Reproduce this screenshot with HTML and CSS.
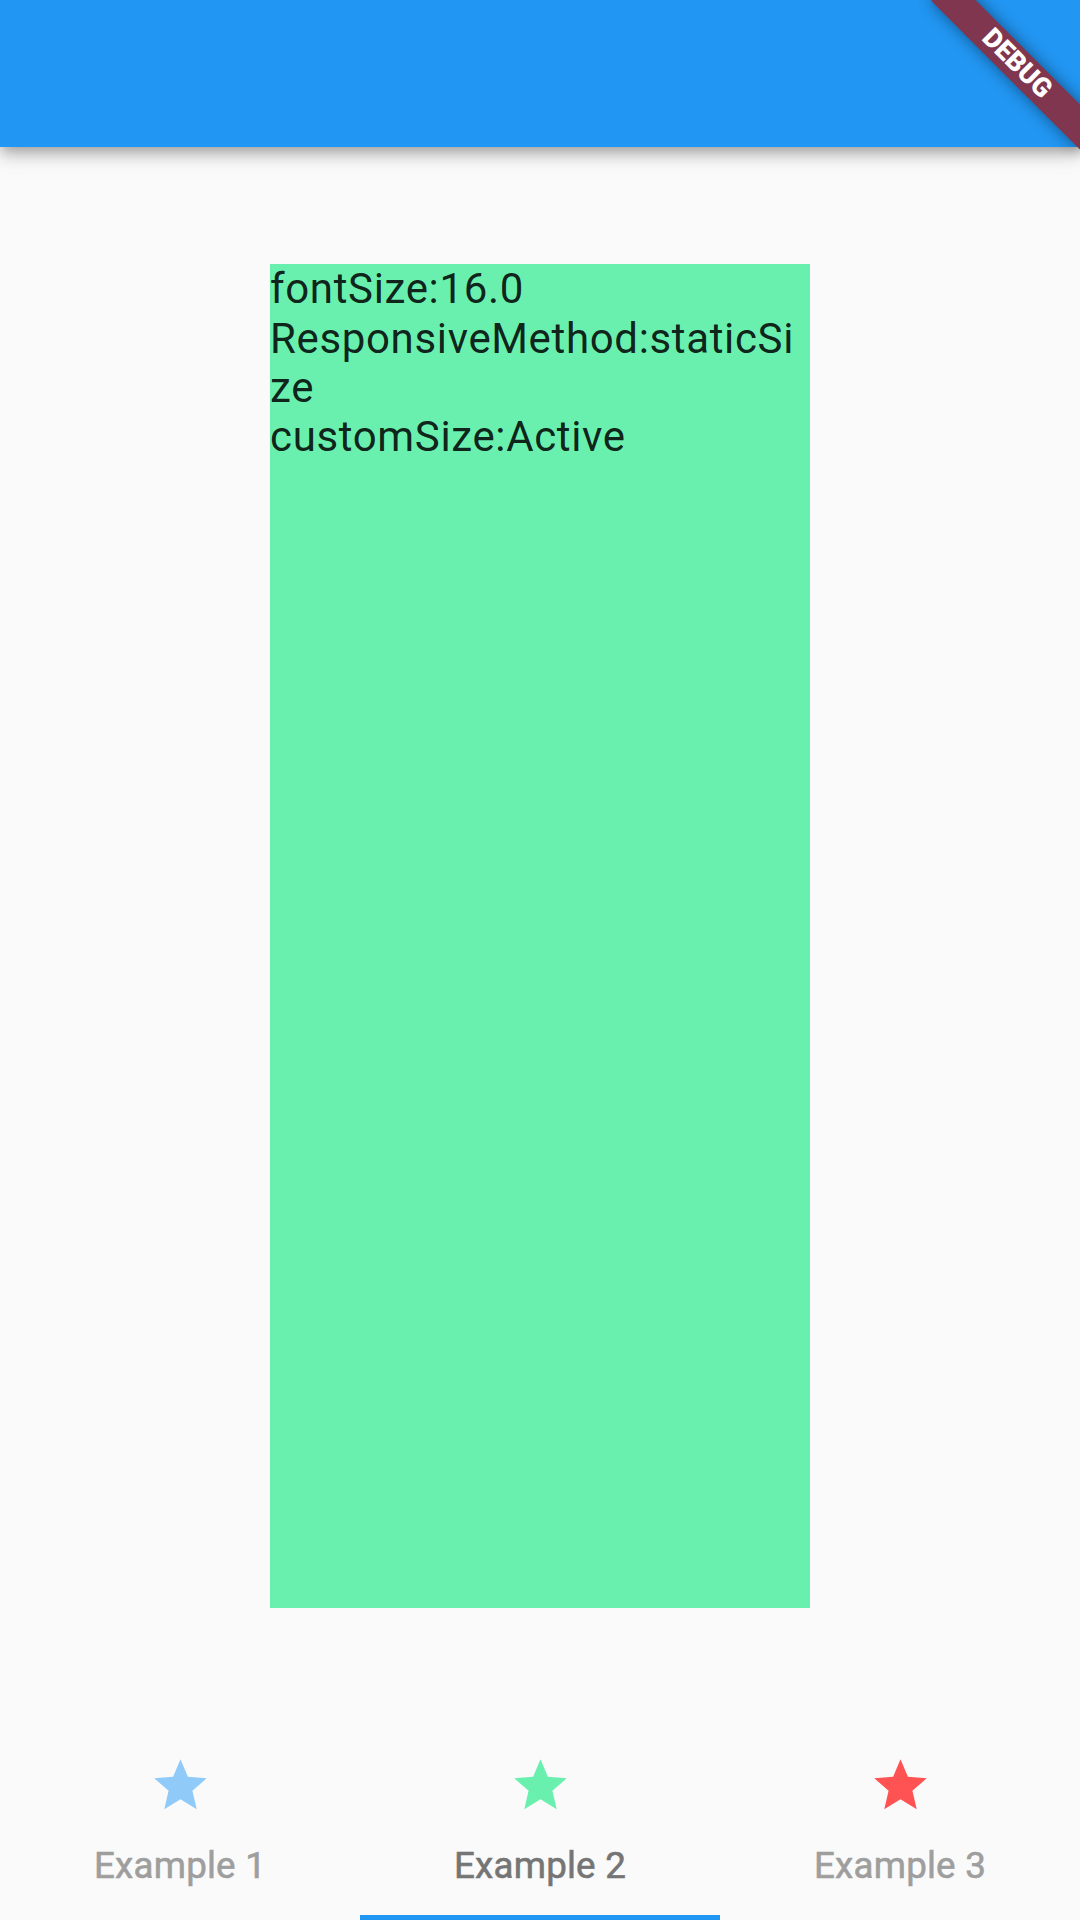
FILE: index.html
```html
<!DOCTYPE html>
<html>
<head>
<meta charset="utf-8">
<link rel="stylesheet" href="styles.css">
</head>
<body>
<div class="app">
  <header class="appbar"></header>
  <main class="content">
    <div class="box">fontSize:16.0<br>ResponsiveMethod:staticSize<br>customSize:Active</div>
  </main>
  <nav class="tabbar">
    <div class="tab">
      <svg class="star" viewBox="0 0 24 24"><path fill="#90CAF9" d="M12 17.27L18.18 21l-1.64-7.03L22 9.24l-7.19-.61L12 2 9.19 8.63 2 9.24l5.46 4.73L5.82 21z"/></svg>
      <span class="label">Example 1</span>
    </div>
    <div class="tab selected">
      <svg class="star" viewBox="0 0 24 24"><path fill="#69F0AE" d="M12 17.27L18.18 21l-1.64-7.03L22 9.24l-7.19-.61L12 2 9.19 8.63 2 9.24l5.46 4.73L5.82 21z"/></svg>
      <span class="label">Example 2</span>
    </div>
    <div class="tab">
      <svg class="star" viewBox="0 0 24 24"><path fill="#FF5252" d="M12 17.27L18.18 21l-1.64-7.03L22 9.24l-7.19-.61L12 2 9.19 8.63 2 9.24l5.46 4.73L5.82 21z"/></svg>
      <span class="label">Example 3</span>
    </div>
  </nav>
  <div class="banner">DEBUG</div>
</div>
</body>
</html>
```
FILE: styles.css
```css
html, body {
  margin: 0;
  padding: 0;
}
body {
  background: #FAFAFA;
  font-family: Roboto, "Noto Sans", sans-serif;
  overflow: hidden;
}
.app {
  position: relative;
  width: 1080px;
  height: 1920px;
  display: flex;
  flex-direction: column;
  overflow: hidden;
}
.appbar {
  flex: 0 0 147px;
  background: #2196F3;
  position: relative;
  z-index: 1;
  box-shadow: 0 5px 10px -3px rgba(0,0,0,0.2), 0 10px 13px 0 rgba(0,0,0,0.14), 0 3px 26px 0 rgba(0,0,0,0.12);
}
.content {
  flex: 1 1 auto;
  display: flex;
  align-items: center;
  justify-content: center;
}
.box {
  width: 540px;
  height: 1344px;
  background: #69F0AE;
  color: rgba(0,0,0,0.87);
  font-size: 42px;
  line-height: 49.2px;
  letter-spacing: 0.65px;
  word-break: break-all;
}
.tabbar {
  flex: 0 0 194.25px;
  display: flex;
}
.tab {
  flex: 1 1 0;
  box-sizing: border-box;
  height: 194.25px;
  border-bottom: 5.25px solid transparent;
  display: flex;
  flex-direction: column;
  align-items: center;
  justify-content: center;
  color: #9E9E9E;
}
.tab.selected {
  border-bottom-color: #2196F3;
  color: #757575;
}
.star {
  width: 63px;
  height: 63px;
  margin-bottom: 26.25px;
  display: block;
}
.label {
  font-size: 36.75px;
  font-weight: 400;
  letter-spacing: 0.2px;
  -webkit-text-stroke: 0.6px currentColor;
  line-height: 43px;
}
.banner {
  position: absolute;
  left: 975px;
  top: 73.5px;
  width: 210px;
  height: 31.5px;
  background: #80364E;
  box-shadow: 0 0 15.75px rgba(0,0,0,0.45);
  transform-origin: 105px -73.5px;
  transform: rotate(45deg);
  color: #fff;
  font-size: 26.8px;
  font-weight: 900;
  line-height: 31.5px;
  text-align: center;
  z-index: 5;
}
```
